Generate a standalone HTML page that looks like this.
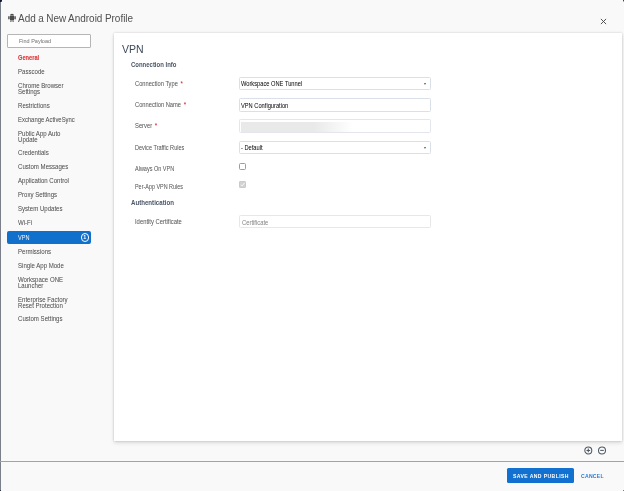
<!DOCTYPE html>
<html><head><meta charset="utf-8">
<style>
*{box-sizing:border-box;margin:0;padding:0}
html,body{width:624px;height:491px;overflow:hidden}
body{background:#f9f9f9;will-change:transform;text-shadow:0 0 0.5px rgba(0,0,0,0.22);font-family:"Liberation Sans",sans-serif;position:relative;color:#555}
.abs{position:absolute;white-space:nowrap}
#lb{position:absolute;left:0;top:0;width:1px;height:491px;background:#7a7f89}
#tlc{position:absolute;left:0;top:0;width:1.5px;height:1.5px;background:#0d1836;border-radius:0 0 1px 0}
#trc{position:absolute;left:622.5px;top:0;width:2px;height:2px;background:#333;border-radius:0 0 0 2px}
#blc{position:absolute;left:0;top:490px;width:1px;height:1px;background:#2a3240}
#brc{position:absolute;left:623px;top:489.5px;width:1.5px;height:1.5px;background:#555;border-radius:2px 0 0 0}
#title{left:18px;top:11.7px;font-size:10.6px;color:#505050;text-shadow:none;line-height:13px;transform:scaleX(0.94);transform-origin:0 0;word-spacing:-0.3px}
#andr{position:absolute;left:7px;top:13px}
#close{position:absolute;left:599.6px;top:17.6px}
#search{position:absolute;left:6.5px;top:34px;width:84.5px;height:14px;border:1px solid #b5b5b5;border-radius:1px;background:#fff}
#search span{white-space:nowrap;position:absolute;left:11.6px;top:2px;font-size:6.1px;transform:scaleX(0.9);transform-origin:0 0;color:#8a8a8a;line-height:8px}
.nav{white-space:nowrap;position:absolute;left:18px;font-size:6.6px;line-height:5.9px;color:#5e5e5e;margin-top:-0.3px;transform:scaleX(0.92);transform-origin:0 0}
.nav.red{color:#ee3535;font-weight:bold;transform:scaleX(0.86)}
#sel{position:absolute;left:7px;top:230.7px;width:83.6px;height:13.3px;background:#1170cc;border-radius:2px}
#sel span{position:absolute;left:11px;top:3.9px;transform:scaleX(0.87);transform-origin:0 0;font-size:6.4px;line-height:6px;color:#fff}
#badge{position:absolute;left:73.7px;top:2.8px;width:8.3px;height:8.3px;border:1.1px solid #fff;border-radius:50%;color:#fff;font-size:5.4px;line-height:6.4px;text-align:center;font-weight:bold;text-shadow:none}
#card{position:absolute;left:114px;top:32.7px;width:507.6px;height:408.8px;background:#fff;box-shadow:0 0 2.2px rgba(0,0,0,.18),0.3px 2px 4px rgba(0,0,0,.12)}
#vpnh{left:122px;top:42.9px;font-size:10.5px;line-height:13px;color:#3f4a58;text-shadow:none}
.sec{white-space:nowrap;position:absolute;left:131px;font-size:6.6px;line-height:6px;font-weight:bold;color:#4a5566;text-shadow:none;transform:scaleX(0.905);transform-origin:0 0}
.lbl{white-space:nowrap;position:absolute;left:135px;font-size:6.4px;line-height:6px;color:#6a6a6a;margin-top:-0.3px;transform:scaleX(0.91);transform-origin:0 0}
.req{color:#e8272c;margin-left:1.1px;font-size:6.8px}
.inp{position:absolute;left:238.5px;width:192.4px;height:13.2px;margin-top:-0.2px;border:1px solid #d9e0e8;border-radius:1.5px;background:#fff}
.inp span{white-space:nowrap;position:absolute;left:1.8px;top:3.2px;font-size:6.8px;line-height:6px;color:#222;transform:scaleX(0.84);transform-origin:0 0}
.arr{position:absolute;right:3.8px;top:4.8px;width:0;height:0;border-left:1.6px solid transparent;border-right:1.6px solid transparent;border-top:2.2px solid #555}
.cb{position:absolute;left:238.5px;width:7.4px;height:7.2px;border:1px solid #9c9c9c;border-radius:1.5px;background:#fff}
#zoom{position:absolute;left:584px;top:446.2px}
#hr{position:absolute;left:0;top:461px;width:624px;height:1px;background:#9ea3aa}
#save{position:absolute;left:507.2px;top:467.5px;width:66.8px;height:15px;background:#1170d0;border-radius:1.5px}
#save span{white-space:nowrap;position:absolute;left:5.4px;top:5.3px;font-size:6.1px;line-height:6px;color:#fff;font-weight:bold;letter-spacing:0.45px;text-shadow:none;transform:scaleX(0.84);transform-origin:0 0}
#cancel{left:580.7px;top:473px;font-size:6.1px;line-height:6px;color:#2a78d0;font-weight:bold;letter-spacing:0.3px;text-shadow:none;transform:scaleX(0.84);transform-origin:0 0}
</style></head><body>
<div id="lb"></div><div id="tlc"></div><div id="trc"></div><div id="blc"></div><div id="brc"></div>
<svg id="andr" width="10" height="10" viewBox="0 0 10 10"><path d="M3 2.2 A2 1.5 0 0 1 7 2.2 Z" fill="#4a4a4a"/><rect x="3" y="2.6" width="4" height="4.9" rx="0.5" fill="#4a4a4a"/><rect x="1" y="2.9" width="1.8" height="3.6" rx="0.9" fill="#6a6a6a"/><rect x="7.2" y="2.9" width="1.8" height="3.6" rx="0.9" fill="#6a6a6a"/><rect x="3.3" y="7.8" width="1.2" height="1.2" rx="0.4" fill="#4a4a4a"/><rect x="5.5" y="7.8" width="1.2" height="1.2" rx="0.4" fill="#4a4a4a"/></svg>
<div class="abs" id="title">Add a New Android Profile</div>
<svg id="close" width="7" height="7" viewBox="0 0 7 7"><path d="M0.9 0.9 L6.1 6.1 M6.1 0.9 L0.9 6.1" stroke="#4a4a4a" stroke-width="0.95"/></svg>
<div id="search"><span>Find Payload</span></div>

<div class="nav red" style="top:55px">General</div>
<div class="nav" style="top:69px">Passcode</div>
<div class="nav" style="top:83px">Chrome Browser<br>Settings</div>
<div class="nav" style="top:103px">Restrictions</div>
<div class="nav" style="top:117px;transform:scaleX(0.895)">Exchange ActiveSync</div>
<div class="nav" style="top:131px">Public App Auto<br>Update</div>
<div class="nav" style="top:150px">Credentials</div>
<div class="nav" style="top:164.5px">Custom Messages</div>
<div class="nav" style="top:178.5px">Application Control</div>
<div class="nav" style="top:192.5px">Proxy Settings</div>
<div class="nav" style="top:206.5px">System Updates</div>
<div class="nav" style="top:220.5px">Wi-Fi</div>
<div id="sel"><span>VPN</span><div id="badge">1</div></div>
<div class="nav" style="top:249px">Permissions</div>
<div class="nav" style="top:263px">Single App Mode</div>
<div class="nav" style="top:277px">Workspace ONE<br>Launcher</div>
<div class="nav" style="top:297px">Enterprise Factory<br>Reset Protection</div>
<div class="nav" style="top:316px">Custom Settings</div>

<div id="card"></div>
<div class="abs" id="vpnh">VPN</div>
<div class="sec" style="top:61.5px">Connection Info</div>
<div class="lbl" style="top:81px;transform:scaleX(0.895)">Connection Type <span class="req">*</span></div>
<div class="inp" style="top:77px"><span>Workspace ONE Tunnel</span><div class="arr"></div></div>
<div class="lbl" style="top:102px;transform:scaleX(0.9)">Connection Name <span class="req">*</span></div>
<div class="inp" style="top:98.5px"><span>VPN Configuration</span></div>
<div class="lbl" style="top:123px">Server <span class="req">*</span></div>
<div class="inp" style="top:119.5px;height:13.4px;border-color:#e3e6ea"><div style="position:absolute;left:1.2px;top:2px;width:112px;height:9.2px;filter:blur(0.5px);background:linear-gradient(90deg,#e9e9e9 65%,#fff)"></div></div>
<div class="lbl" style="top:145px;transform:scaleX(0.87)">Device Traffic Rules</div>
<div class="inp" style="top:141px"><span>- Default</span><div class="arr"></div></div>
<div class="lbl" style="top:165.9px;transform:scaleX(0.86)">Always On VPN</div>
<div class="cb" style="top:162.7px"></div>
<div class="lbl" style="top:184.4px;transform:scaleX(0.85)">Per-App VPN Rules</div>
<div class="cb" style="top:181px;border-color:#cbcbcb;background:#d2d2d2;border-radius:1px"><svg style="position:absolute;left:0;top:0" width="5.4" height="5.2" viewBox="0 0 5.4 5.2"><path d="M0.9 2.6 L2.1 3.9 L4.6 0.9" fill="none" stroke="#f6f6f6" stroke-width="1"/></svg></div>
<div class="sec" style="top:200px;transform:scaleX(0.93)">Authentication</div>
<div class="lbl" style="top:219px;transform:scaleX(0.915)">Identity Certificate</div>
<div class="inp" style="top:215px;height:13.6px;border-color:#e6e7e9"><span style="color:#9a9a9a;left:2.3px;top:3.9px;transform:scaleX(0.86)">Certificate</span></div>

<svg id="zoom" width="22" height="9" viewBox="0 0 22 9"><g fill="none" stroke="#4d5866" stroke-width="1.05"><circle cx="4.3" cy="4.4" r="3.5"/><path d="M2.5 4.4 H6.1 M4.3 2.6 V6.2"/><circle cx="18" cy="4.4" r="3.5"/><path d="M16.2 4.4 H19.8"/></g></svg>
<div id="hr"></div>
<div id="save"><span>SAVE AND PUBLISH</span></div>
<div class="abs" id="cancel">CANCEL</div>
</body></html>
